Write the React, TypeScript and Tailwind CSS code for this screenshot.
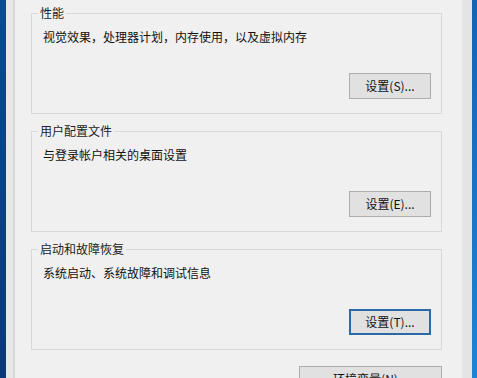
const groups = [
  { title: "性能", desc: "视觉效果，处理器计划，内存使用，以及虚拟内存", btn: "设置(S)...", focused: false },
  { title: "用户配置文件", desc: "与登录帐户相关的桌面设置", btn: "设置(E)...", focused: false },
  { title: "启动和故障恢复", desc: "系统启动、系统故障和调试信息", btn: "设置(T)...", focused: true },
];

function WinButton({ label, focused, wide }: { label: string; focused?: boolean; wide?: boolean }) {
  return (
    <button
      className={`flex items-center justify-center h-[26px] shrink-0 bg-[#e1e1e1] text-[12px] leading-4 text-[#111] ${
        wide ? "w-[143px]" : "w-[82px]"
      } ${focused ? "border-2 border-[#2b6aa3]" : "border border-[#adadad]"}`}
    >
      {label}
    </button>
  );
}

export default function App() {
  return (
    <div
      className="flex w-[477px] h-[378px] overflow-hidden bg-[#f0f0f0] text-[#111]"
      style={{ fontFamily: '"Noto Sans CJK SC", "Noto Sans", sans-serif' }}
    >
      {/* desktop edge + window frame, left */}
      <div className="w-[6px] shrink-0 bg-gradient-to-b from-[#0c4a8e] to-[#0a3a72]" />
      <div className="w-[7px] shrink-0 bg-[#e8e8e8]" />
      <div className="w-[2px] shrink-0 bg-[#d9d9d9]" />

      {/* dialog body */}
      <div className="flex-1 flex flex-col pl-[16px] pr-[20px] pt-[5px]">
        {groups.map((g, i) => (
          <fieldset
            key={g.title}
            className={`h-[109px] shrink-0 border border-[#d8d8d8] px-[10px] ${i > 0 ? "mt-[9px]" : ""}`}
          >
            <legend className="ml-[-4px] px-[2px] text-[12px] leading-4 text-[#222]">{g.title}</legend>
            <div className="mt-[8px] text-[12px] leading-4 pl-[1px]">{g.desc}</div>
            <div className="flex justify-end mt-[28px]">
              <WinButton label={g.btn} focused={g.focused} />
            </div>
          </fieldset>
        ))}
        <div className="flex justify-end shrink-0 mt-[16px]">
          <WinButton label="环境变量(N)..." wide />
        </div>
      </div>

      {/* window frame + desktop edge, right */}
      <div className="w-[10px] shrink-0 bg-[#e4e4e4]" />
      <div className="w-[5px] shrink-0 bg-gradient-to-b from-[#1463b5] to-[#1f84d4]" />
    </div>
  );
}
